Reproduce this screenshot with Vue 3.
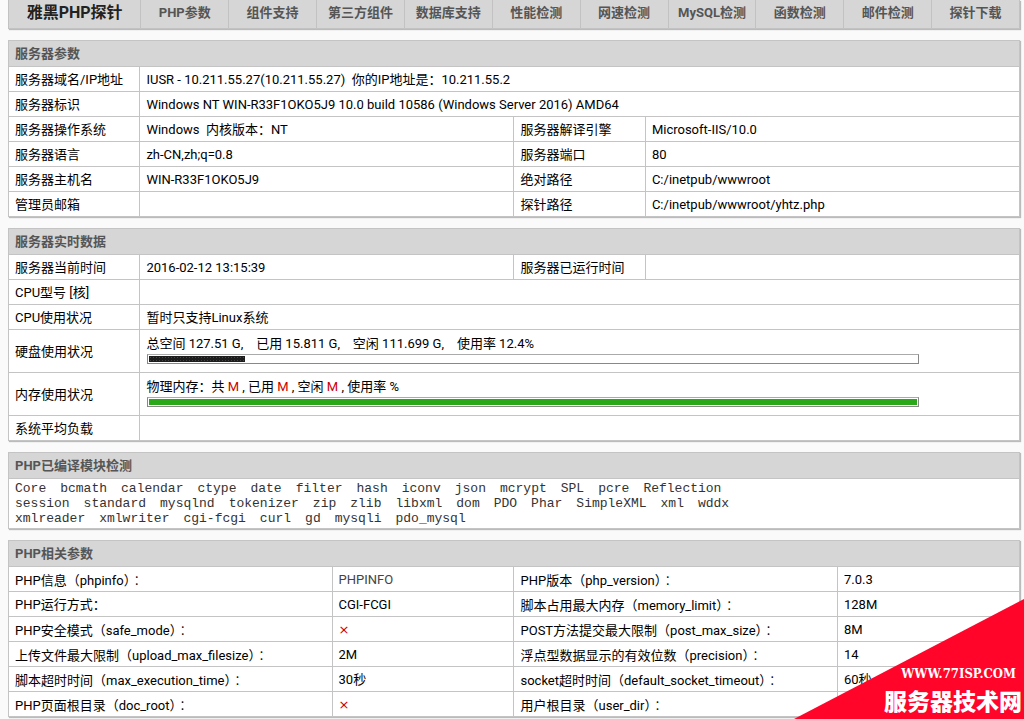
<script setup>
const navItems = ['PHP参数', '组件支持', '第三方组件', '数据库支持', '性能检测', '网速检测', 'MySQL检测', '函数检测', '邮件检测', '探针下载']

const disk = { total: '127.51', used: '15.811', free: '111.699', percent: 12.4 }
const memory = { percent: 100 }

const modules = [
  ['Core', 'bcmath', 'calendar', 'ctype', 'date', 'filter', 'hash', 'iconv', 'json', 'mcrypt', 'SPL', 'pcre', 'Reflection'],
  ['session', 'standard', 'mysqlnd', 'tokenizer', 'zip', 'zlib', 'libxml', 'dom', 'PDO', 'Phar', 'SimpleXML', 'xml', 'wddx'],
  ['xmlreader', 'xmlwriter', 'cgi-fcgi', 'curl', 'gd', 'mysqli', 'pdo_mysql']
]

const phpRows = [
  [{ name: 'PHP信息', key: 'phpinfo', value: 'PHPINFO', link: true }, { name: 'PHP版本', key: 'php_version', value: '7.0.3' }],
  [{ name: 'PHP运行方式', value: 'CGI-FCGI' }, { name: '脚本占用最大内存', key: 'memory_limit', value: '128M' }],
  [{ name: 'PHP安全模式', key: 'safe_mode', off: true }, { name: 'POST方法提交最大限制', key: 'post_max_size', value: '8M' }],
  [{ name: '上传文件最大限制', key: 'upload_max_filesize', value: '2M' }, { name: '浮点型数据显示的有效位数', key: 'precision', value: '14' }],
  [{ name: '脚本超时时间', key: 'max_execution_time', value: '30秒' }, { name: 'socket超时时间', key: 'default_socket_timeout', value: '60秒' }],
  [{ name: 'PHP页面根目录', key: 'doc_root', off: true }, { name: '用户根目录', key: 'user_dir', value: '' }]
]
</script>

<template>
  <div class="page">
    <nav class="nav">
      <a class="brand" href="#">雅黑PHP探针</a>
      <a v-for="item in navItems" :key="item" href="#">{{ item }}</a>
    </nav>

    <table class="panel">
      <colgroup><col class="c13"><col class="c37"><col class="c13"><col class="c37"></colgroup>
      <thead><tr><th colspan="4">服务器参数</th></tr></thead>
      <tbody>
        <tr><td>服务器域名/IP地址</td><td colspan="3">IUSR - 10.211.55.27(10.211.55.27)&nbsp; 你的IP地址是：10.211.55.2</td></tr>
        <tr><td>服务器标识</td><td colspan="3">Windows NT WIN-R33F1OKO5J9 10.0 build 10586 (Windows Server 2016) AMD64</td></tr>
        <tr><td>服务器操作系统</td><td>Windows&nbsp; 内核版本：NT</td><td>服务器解译引擎</td><td>Microsoft-IIS/10.0</td></tr>
        <tr><td>服务器语言</td><td>zh-CN,zh;q=0.8</td><td>服务器端口</td><td>80</td></tr>
        <tr><td>服务器主机名</td><td>WIN-R33F1OKO5J9</td><td>绝对路径</td><td>C:/inetpub/wwwroot</td></tr>
        <tr><td>管理员邮箱</td><td></td><td>探针路径</td><td>C:/inetpub/wwwroot/yhtz.php</td></tr>
      </tbody>
    </table>

    <table class="panel">
      <colgroup><col class="c13"><col class="c37"><col class="c13"><col class="c37"></colgroup>
      <thead><tr><th colspan="4">服务器实时数据</th></tr></thead>
      <tbody>
        <tr><td>服务器当前时间</td><td>2016-02-12 13:15:39</td><td>服务器已运行时间</td><td></td></tr>
        <tr><td>CPU型号 [核]</td><td colspan="3"></td></tr>
        <tr><td>CPU使用状况</td><td colspan="3">暂时只支持Linux系统</td></tr>
        <tr class="usage">
          <td>硬盘使用状况</td>
          <td colspan="3">
            <p>总空间 {{ disk.total }} G,&nbsp;&nbsp;&nbsp; 已用 {{ disk.used }} G,&nbsp;&nbsp;&nbsp; 空闲 {{ disk.free }} G,&nbsp;&nbsp;&nbsp; 使用率 {{ disk.percent }}%</p>
            <div class="bar"><div class="fill disk" :style="{ width: disk.percent + '%' }"></div></div>
          </td>
        </tr>
        <tr class="usage">
          <td>内存使用状况</td>
          <td colspan="3">
            <p>物理内存：共 <span class="red">M</span> , 已用 <span class="red">M</span> , 空闲 <span class="red">M</span> , 使用率 %</p>
            <div class="bar"><div class="fill memory" :style="{ width: memory.percent + '%' }"></div></div>
          </td>
        </tr>
        <tr><td>系统平均负载</td><td colspan="3"></td></tr>
      </tbody>
    </table>

    <table class="panel">
      <thead><tr><th>PHP已编译模块检测</th></tr></thead>
      <tbody>
        <tr>
          <td class="modules">
            <div v-for="(line, i) in modules" :key="i" class="line"><span v-for="m in line" :key="m">{{ m }}</span></div>
          </td>
        </tr>
      </tbody>
    </table>

    <table class="panel">
      <colgroup><col class="c32"><col class="c18"><col class="c32"><col class="c18"></colgroup>
      <thead><tr><th colspan="4">PHP相关参数</th></tr></thead>
      <tbody>
        <tr v-for="(row, i) in phpRows" :key="i">
          <template v-for="cell in row" :key="cell.name">
            <td>{{ cell.name }}<template v-if="cell.key">（{{ cell.key }}）<span class="mid">：</span></template><template v-else>：</template></td>
            <td><a v-if="cell.link" class="info" href="#">{{ cell.value }}</a><span v-else-if="cell.off" class="red cross">×</span><template v-else>{{ cell.value }}</template></td>
          </template>
        </tr>
      </tbody>
    </table>

    <div class="ribbon">
      <span class="url">WWW.77ISP.COM</span>
      <span class="site">服务器技术网</span>
    </div>
  </div>
</template>

<style>
body { background: #fafafa; overflow: hidden; }
</style>

<style scoped>
.page {
  padding: 0 4px 0 8px;
  font: 13px/20px Roboto, "Noto Sans CJK SC", sans-serif;
  color: #000;
}
a { color: inherit; text-decoration: none; }
.nav {
  display: flex;
  margin-bottom: 11px;
  background: #d6d6d6;
  border: 1px solid #c2c2c2;
  border-top: 0;
  box-shadow: 1px 1px 1px #bbb;
}
.nav a {
  flex: 1;
  padding: 3px 0 5px;
  border-left: 1px solid #c2c2c2;
  text-align: center;
  font-weight: bold;
  color: #555;
  white-space: nowrap;
}
.nav a.brand { flex: 0 0 13%; border-left: 0; font-size: 16px; color: #222; }
.panel {
  width: 100%;
  table-layout: fixed;
  border-collapse: collapse;
  margin-bottom: 11px;
  background: #fff;
  box-shadow: 1px 1px 1px #bbb;
}
.c13 { width: 13%; }
.c37 { width: 37%; }
.c32 { width: 32%; }
.c18 { width: 18%; }
th, td {
  padding: 0 6px;
  border: 1px solid #c4c4c4;
  text-align: left;
  white-space: nowrap;
}
th { height: 25px; background: #d6d6d6; color: #555; }
td { height: 22px; padding-top: 2px; }
.usage td { height: 40px; }
p { margin: 0; line-height: 20px; }
.bar {
  box-sizing: border-box;
  width: 89%;
  height: 10px;
  margin: 0 0 6px 1px;
  padding: 1px;
  background: #fff;
  border: 1px solid #888;
  border-top-color: #aaa;
}
.fill { height: 6px; }
.disk { background: #1c1c1c radial-gradient(#444 1px, transparent 1px) 0 0 / 3px 3px; }
.memory { background: #2aa81a; }
.red { color: #c00; }
.cross { font-family: "DejaVu Sans", sans-serif; }
.info { color: #444; }
.mid { font-family: "Noto Sans CJK TC", sans-serif; font-weight: 300; }
.panel .modules {
  padding: 2px 6px;
  font-family: "Liberation Mono", monospace;
  line-height: 15px;
  color: #333;
}
.line { display: flex; gap: 14px; }
.ribbon {
  position: fixed;
  right: 0;
  bottom: 0;
  display: flex;
  flex-direction: column;
  justify-content: flex-end;
  align-items: flex-end;
  box-sizing: border-box;
  width: 230px;
  height: 120px;
  padding-bottom: 1px;
  background: #ff0529;
  clip-path: polygon(100% 0, 100% 100%, 0 100%);
  color: #fff;
}
.url { padding-right: 8px; font: bold 13px/16px "DejaVu Serif Condensed", "Liberation Serif", serif; }
.site { padding-right: 2px; font: 900 23px/36px "Noto Sans CJK SC", sans-serif; }
</style>
